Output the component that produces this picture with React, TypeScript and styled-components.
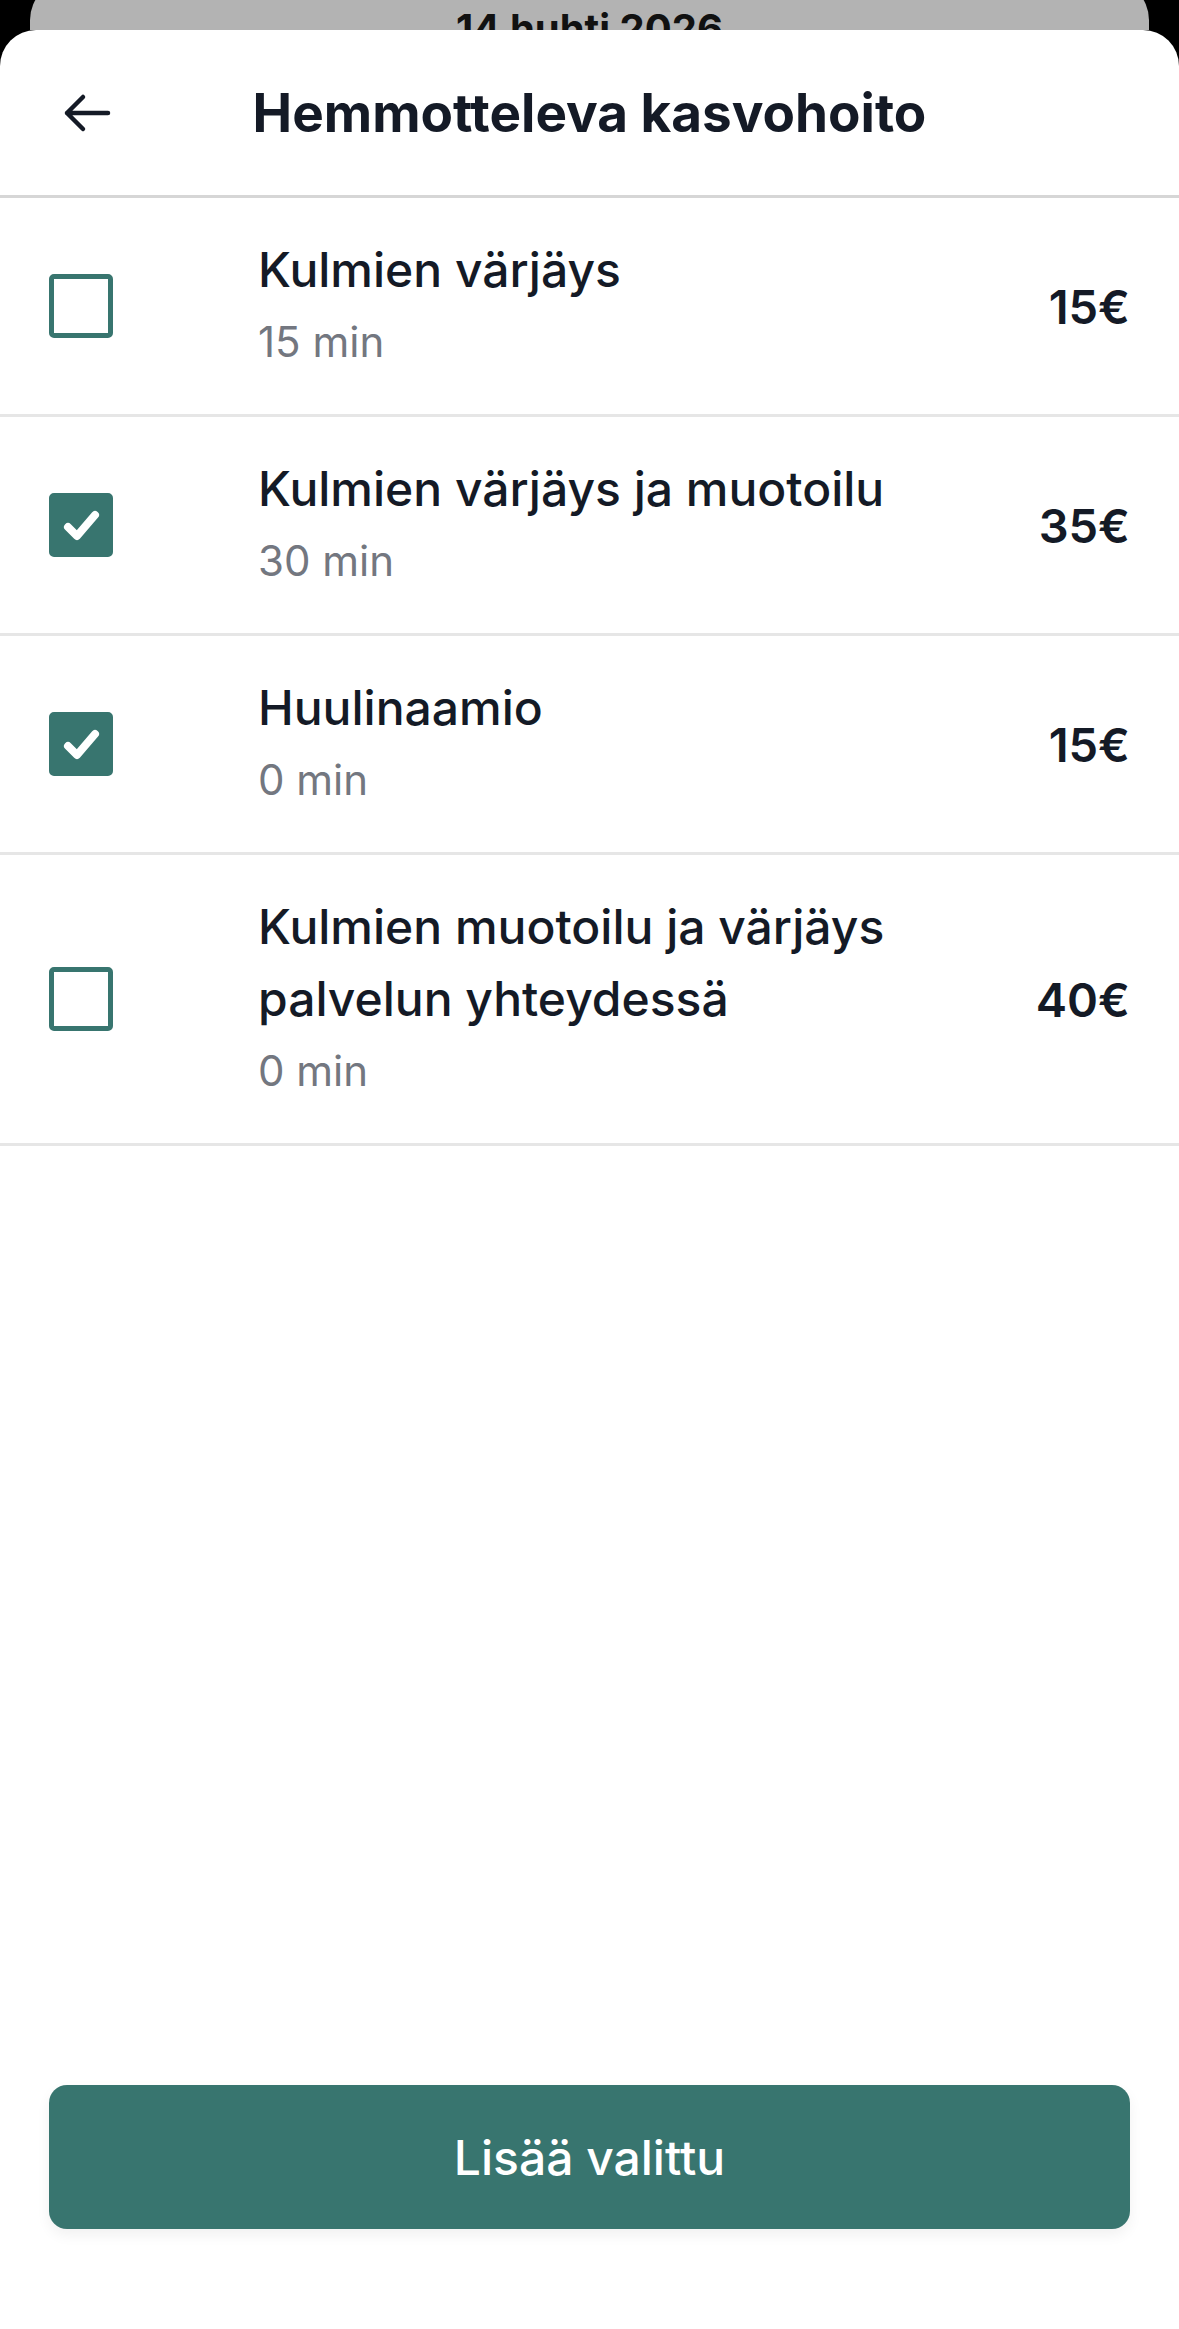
import React, { useState } from "react";
import styled, { createGlobalStyle } from "styled-components";

const Global = createGlobalStyle`
  html, body {
    margin: 0;
    padding: 0;
    background: #000;
  }
  body {
    font-family: Inter, "Noto Sans", "Liberation Sans", sans-serif;
    color: #141a26;
  }
`;

const Screen = styled.div`
  height: 100vh;
  display: flex;
  flex-direction: column;
  overflow: hidden;
`;

const BehindCard = styled.div`
  flex: none;
  box-sizing: border-box;
  height: 50px;
  margin: -20px 30px 0;
  padding-top: 29px;
  background: #b3b3b3;
  border-radius: 40px 40px 0 0;
  overflow: hidden;
  text-align: center;
  font-size: 40px;
  line-height: 1;
  font-weight: 700;
  color: #111;
`;

const Sheet = styled.div`
  flex: 1;
  display: flex;
  flex-direction: column;
  background: #fff;
  border-radius: 36px 36px 0 0;
`;

const Header = styled.div`
  height: 165px;
  display: grid;
  grid-template-columns: 1fr auto 1fr;
  align-items: center;
  border-bottom: 3px solid #d6d6d6;
`;

const BackButton = styled.button`
  justify-self: start;
  margin-left: 58px;
  padding: 4px;
  border: 0;
  background: none;
  display: flex;
  cursor: pointer;
`;

const Title = styled.h1`
  margin: 0;
  font-size: 53px;
  font-weight: 700;
  color: #141a26;
`;

const List = styled.div`
  display: flex;
  flex-direction: column;
`;

const Row = styled.label`
  display: flex;
  align-items: center;
  padding: 36px 49px 36px 49px;
  border-bottom: 3px solid #e6e6e6;
  cursor: pointer;
`;

const Box = styled.span<{ $checked: boolean }>`
  flex: none;
  width: 64px;
  height: 64px;
  box-sizing: border-box;
  margin-right: 145px;
  border-radius: 5px;
  border: 5px solid #38756f;
  background: ${(p) => (p.$checked ? "#38756f" : "#fff")};
  display: flex;
  align-items: center;
  justify-content: center;
`;

const Info = styled.div`
  flex: 1;
  min-width: 0;
`;

const Name = styled.div`
  font-size: 48px;
  line-height: 72px;
  font-weight: 500;
  color: #141a26;
`;

const Duration = styled.div`
  font-size: 42px;
  line-height: 72px;
  color: #737780;
`;

const Price = styled.div`
  flex: none;
  margin-left: 24px;
  font-size: 47px;
  font-weight: 600;
  color: #141a26;
`;

const Spacer = styled.div`
  flex: 1;
`;

const Footer = styled.div`
  padding: 0 49px 100px;
`;

const AddButton = styled.button`
  width: 100%;
  height: 144px;
  border: 0;
  border-radius: 18px;
  background: #38756f;
  color: #fff;
  font-family: inherit;
  font-size: 48px;
  font-weight: 500;
  box-shadow: 0 6px 14px rgba(0, 0, 0, 0.06);
  cursor: pointer;
`;

type Service = { name: string; minutes: number; price: number; checked: boolean };

const initial: Service[] = [
  { name: "Kulmien värjäys", minutes: 15, price: 15, checked: false },
  { name: "Kulmien värjäys ja muotoilu", minutes: 30, price: 35, checked: true },
  { name: "Huulinaamio", minutes: 0, price: 15, checked: true },
  { name: "Kulmien muotoilu ja värjäys palvelun yhteydessä", minutes: 0, price: 40, checked: false },
];

function Check() {
  return (
    <svg width="64" height="64" viewBox="0 0 64 64" style={{ margin: -5 }}>
      <path d="M19 34 L28 43 L46 22" fill="none" stroke="#fff" strokeWidth="8" strokeLinecap="round" strokeLinejoin="round" />
    </svg>
  );
}

export default function App() {
  const [items, setItems] = useState(initial);

  const toggle = (i: number) =>
    setItems((list) => list.map((s, j) => (j === i ? { ...s, checked: !s.checked } : s)));

  return (
    <Screen>
      <Global />
      <BehindCard>14 huhti 2026</BehindCard>
      <Sheet>
        <Header>
          <BackButton aria-label="Takaisin">
            <svg width="50" height="40" viewBox="0 0 50 40">
              <path d="M46 20 H5 M21 4 L5 20 L21 36" fill="none" stroke="#141a26" strokeWidth="4.5" strokeLinecap="round" strokeLinejoin="round" />
            </svg>
          </BackButton>
          <Title>Hemmotteleva kasvohoito</Title>
          <span />
        </Header>
        <List>
          {items.map((s, i) => (
            <Row key={s.name} onClick={() => toggle(i)}>
              <Box $checked={s.checked}>{s.checked && <Check />}</Box>
              <Info>
                <Name>{s.name}</Name>
                <Duration>{s.minutes} min</Duration>
              </Info>
              <Price>{s.price}€</Price>
            </Row>
          ))}
        </List>
        <Spacer />
        <Footer>
          <AddButton>Lisää valittu</AddButton>
        </Footer>
      </Sheet>
    </Screen>
  );
}
